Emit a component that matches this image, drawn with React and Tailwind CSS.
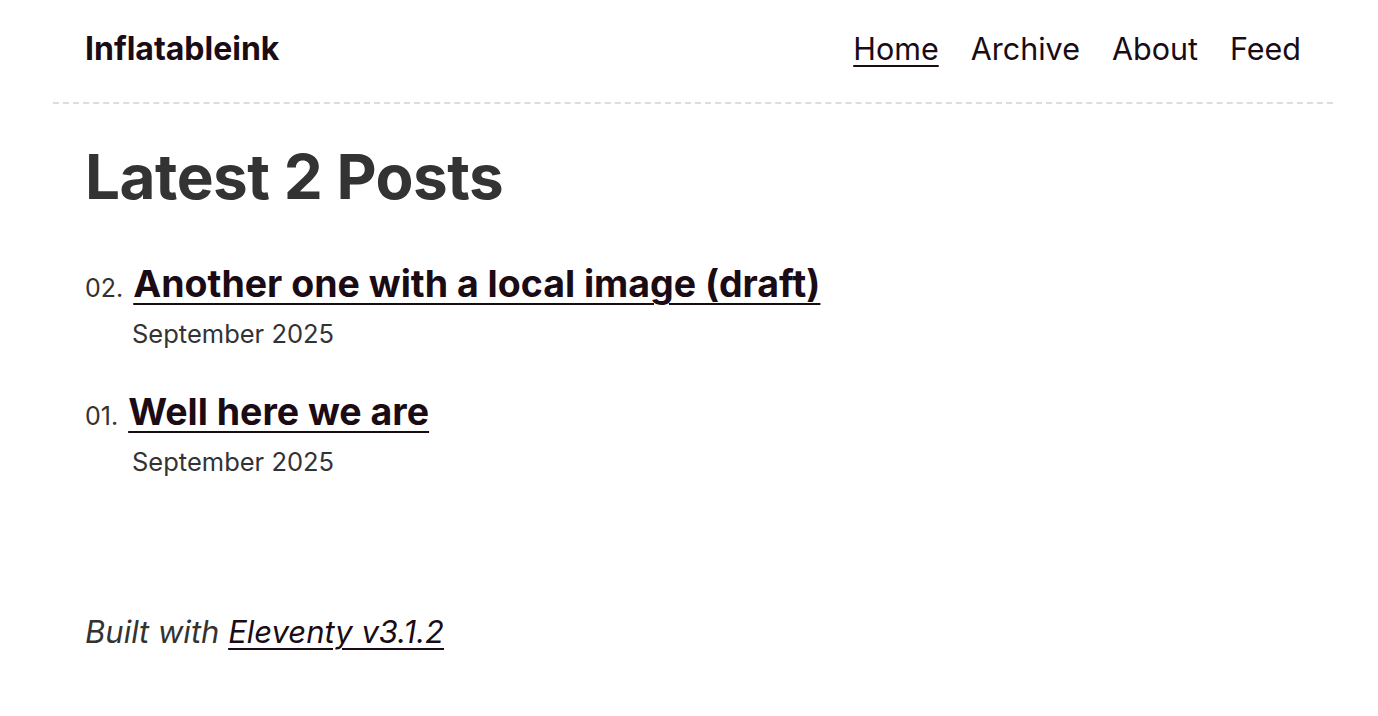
import React from 'react';

const posts = [
  { num: '02.', title: 'Another one with a local image (draft)', date: 'September 2025' },
  { num: '01.', title: 'Well here we are', date: 'September 2025' },
];

const navItems = ['Home', 'Archive', 'About', 'Feed'];

export default function App() {
  return (
    <div className="min-h-screen bg-white pl-[53px] pr-[45px] text-[#333] font-['Inter',sans-serif]">
      <header className="flex h-[104px] items-center justify-between border-b-2 border-dashed border-[#dddddd] px-8 pb-1">
        <a href="#" className="text-[32px] font-bold text-[#1a0b14]">
          Inflatableink
        </a>
        <nav className="flex gap-[32px] text-[30.5px] text-[#1a0b14]">
          {navItems.map((item, i) => (
            <a
              key={item}
              href="#"
              className={i === 0 ? 'underline decoration-2 underline-offset-[5px]' : ''}
            >
              {item}
            </a>
          ))}
        </nav>
      </header>

      <main className="px-8">
        <h1 className="mt-[36px] text-[62px] font-bold leading-[1.2] tracking-[-0.5px] text-[#333]">
          Latest 2 Posts
        </h1>

        <ol className="mt-[47px] flex flex-col gap-[36px]">
          {posts.map((p) => (
            <li key={p.num}>
              <div className="flex items-baseline gap-[10px]">
                <span className="text-[25px] text-[#333]">{p.num}</span>
                <a
                  href="#"
                  className="text-[37.5px] font-bold leading-[1.2] text-[#1a0b14] underline decoration-2 underline-offset-[6px]"
                >
                  {p.title}
                </a>
              </div>
              <div className="ml-[47px] mt-[7px] text-[25.5px] text-[#333]">{p.date}</div>
            </li>
          ))}
        </ol>
      </main>

      <footer className="mt-[128px] px-8 text-[31px] italic text-[#333]">
        Built with{' '}
        <a href="#" className="text-[#1a0b14] underline decoration-2 underline-offset-[5px]">
          Eleventy v3.1.2
        </a>
      </footer>
    </div>
  );
}
